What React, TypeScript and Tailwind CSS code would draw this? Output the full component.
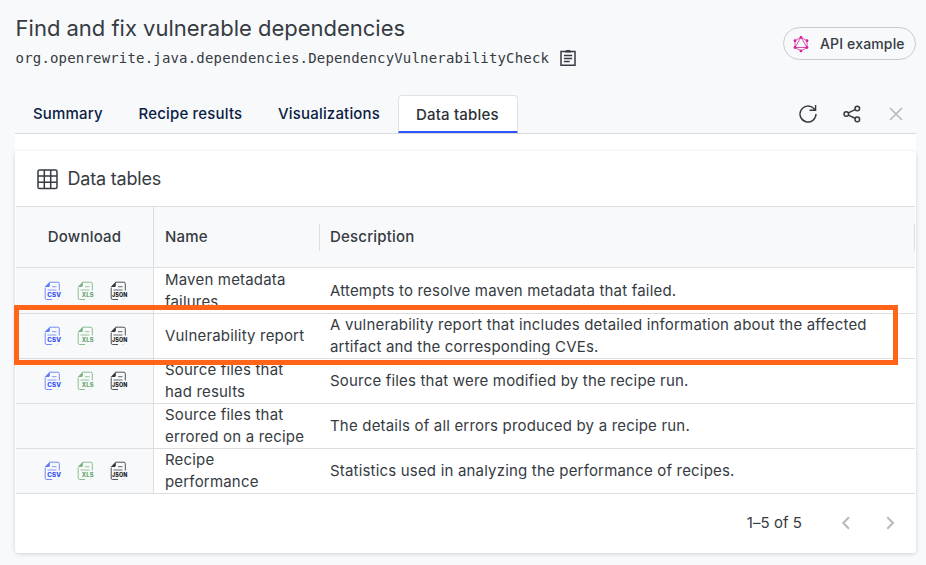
import React from "react";

const FileIcon = ({ label, color, ink }: { label: string; color: string; ink: string }) => (
  <svg width="20" height="20" viewBox="0 0 20 20" fill="none" className="overflow-visible">
    <path d="M2.2 6.5V17q0 1.5 1.5 1.5H9" stroke={color} strokeWidth="1" opacity=".85" />
    <path d="M6.5 1.2H14.8q1.5 0 1.5 1.5V9.5" stroke={color} strokeWidth="1" opacity=".85" />
    <path d="M1.7 6 6.8.8V4.5Q6.8 6 5.3 6Z" fill={color} />
    <path d="M9 5.7H13.5M4.5 9H13.5" stroke={color} strokeWidth="1" opacity=".75" />
    <path d="M13 18.5H14.5L16 17" stroke={color} strokeWidth=".8" opacity=".15" />
    <text
      x={label === "JSON" ? 3 : label === "XLS" ? 5.7 : 4.2}
      y="15.8"
      fontFamily="Inter, sans-serif"
      fontWeight="800"
      fontSize="5.6"
      textLength={label === "JSON" ? 15.6 : label === "XLS" ? 12 : 14}
      lengthAdjust="spacingAndGlyphs"
      fill={ink}
    >
      {label}
    </text>
  </svg>
);

const Downloads = () => (
  <div className="flex gap-[13px] pl-[27px]">
    <FileIcon label="CSV" color="#5b78fa" ink="#2c4bf5" />
    <FileIcon label="XLS" color="#78b37e" ink="#65a66c" />
    <FileIcon label="JSON" color="#333538" ink="#17191c" />
  </div>
);

const rows = [
  { name: "Maven metadata failures", text: "Attempts to resolve maven metadata that failed.", files: true },
  {
    name: "Vulnerability report",
    text: "A vulnerability report that includes detailed information about the affected artifact and the corresponding CVEs.",
    files: true,
  },
  { name: "Source files that had results", text: "Source files that were modified by the recipe run.", files: true },
  { name: "Source files that errored on a recipe", text: "The details of all errors produced by a recipe run.", files: false },
  { name: "Recipe performance", text: "Statistics used in analyzing the performance of recipes.", files: true },
];

const GraphqlIcon = () => (
  <svg width="16" height="18" viewBox="0 0 16 18" fill="none" stroke="#d61f9c" strokeWidth=".8">
    <path d="M8 2.3 14 5.7V12.5L8 15.9 2 12.5V5.7ZM8 2.3 14 12.5H2Z" />
    <g fill="#d61f9c" stroke="none">
      <circle cx="8" cy="2.3" r="1.4" />
      <circle cx="14" cy="5.7" r="1.4" />
      <circle cx="14" cy="12.5" r="1.4" />
      <circle cx="8" cy="15.9" r="1.4" />
      <circle cx="2" cy="12.5" r="1.4" />
      <circle cx="2" cy="5.7" r="1.4" />
    </g>
  </svg>
);

export default function App() {
  return (
    <div className="relative h-[565px] w-[926px] overflow-hidden bg-[#f8f9fb] pl-[15px] pr-[10px] font-['Inter',sans-serif] text-[#363b42]">
      <header className="flex h-[95px] items-start justify-between">
        <div className="pt-[13px]">
          <h1 className="pl-[0.6px] text-[22px] leading-[30px] tracking-[-0.01px]">Find and fix vulnerable dependencies</h1>
          <div className="flex items-center gap-[9px] pl-[0.6px] pt-[5px]">
            <span className="font-['DejaVu_Sans_Mono',monospace] text-[14px] leading-5 tracking-[0.177px]">
              org.openrewrite.java.dependencies.DependencyVulnerabilityCheck
            </span>
            <svg width="20" height="20" viewBox="0 0 20 20" fill="none" stroke="#363b42" strokeWidth="1.5">
              <path d="M3 3.5H17V17.2H3Z" />
              <path d="M7.2 3Q7.2 2.3 8.7 2.3 10 1 11.4 2.3 13 2.3 13 3V4.5H7.2Z" fill="#363b42" stroke="none" />
              <path d="M5.9 7.5H14.2M5.9 10.5H14.2M5.9 13.5H11.7" />
            </svg>
          </div>
        </div>
        <button className="mt-[27px] flex h-[33px] w-[133px] items-center gap-[11px] rounded-full border border-[#c9cbcf] pl-[9px] text-[14px] font-medium tracking-[0.16px]">
          <GraphqlIcon />
          API example
        </button>
      </header>

      <nav className="flex h-[39px] border-b border-[#d9dbde] text-[15px] font-medium tracking-[0.18px] text-[#0b2143]">
        <span className="w-[105px] pl-[18px] pt-[7px] leading-6">Summary</span>
        <span className="w-[140px] pl-[18.5px] pt-[7px] leading-6">Recipe results</span>
        <span className="w-[138px] pl-[18px] pt-[7px] leading-6">Visualizations</span>
        <span className="h-[38px] w-[120px] rounded-t-[4px] border border-b-2 border-[#dfe1e4] border-b-[#2f54ff] bg-white pl-[17px] pt-[7px] leading-6 text-[#2b3037]">
          Data tables
        </span>
        <div className="ml-auto flex items-center gap-6 pr-[10px]">
          <svg width="20" height="20" viewBox="0 0 20 20" fill="none" stroke="#363b42" strokeWidth="1.4">
            <path d="M18 10A8 8 0 1 1 15.6 4.3L17.5 6.2M17.6 1V6.2H11.5" />
          </svg>
          <svg width="20" height="20" viewBox="0 0 20 20" fill="none" stroke="#363b42" strokeWidth="1.5">
            <circle cx="4.3" cy="10" r="2.3" />
            <circle cx="15.3" cy="4.5" r="2.3" />
            <circle cx="15.3" cy="15.4" r="2.3" />
            <path d="M6.4 8.9 13.1 5.6M6.4 11.1 13.1 14.3" />
          </svg>
          <svg width="20" height="20" viewBox="0 0 20 20" fill="none" stroke="#b7b9bc" strokeWidth="1.6">
            <path d="M4 4 16 16M16 4 4 16" />
          </svg>
        </div>
      </nav>

      <div className="bg-white pt-[17px]">
        <section className="h-[402px] rounded-[4px] bg-white px-px shadow-[0_1px_4px_rgba(0,0,0,0.16)]">
          <div className="flex h-[56px] items-center gap-[8.4px] border-b border-[#dcdee0] pl-[20px] text-[18px] tracking-[-0.18px]">
            <svg width="23" height="22" viewBox="0 0 23 22" fill="none" stroke="#363b42" strokeWidth="1.5">
              <rect x="2" y="1.9" width="19" height="18.6" rx="1.6" />
              <path d="M8.3 1.9V20.5M14.7 1.9V20.5M2 8H21M2 14.3H21" />
            </svg>
            Data tables
          </div>
          <div className="flex h-[61px] items-center border-b border-[#dcdee0] bg-[#f8f9fb] text-[15px] font-medium tracking-[0.2px]">
            <div className="flex h-full w-[138px] items-center justify-center border-r border-[#dcdee0]">Download</div>
            <div className="w-[165px] pl-[11px]">Name</div>
            <div className="flex h-[27px] flex-1 items-center border-x border-[#dcdee0] pl-[10px]">Description</div>
          </div>
          {rows.map((row) => (
            <div key={row.name} className="flex h-[45px] border-b border-[#dcdee0] text-[15px] leading-[22px] tracking-[0.185px] nth-[3]:h-[46px]">
              <div className="flex w-[138px] items-center border-r border-[#dcdee0] bg-[#f8f9fb]">{row.files && <Downloads />}</div>
              <div className="flex w-[165px] items-center pl-[11px] pr-[10px]">{row.name}</div>
              <div className="flex flex-1 items-center pl-[11px] pr-[30px]">{row.text}</div>
            </div>
          ))}
          <div className="flex h-[58px] items-center justify-end pr-[15px] text-[15px] tracking-[0.05px]">
            <span>1–5 of 5</span>
            <svg className="ml-[34px]" width="20" height="20" viewBox="0 0 20 20" fill="none" stroke="#b7b9bc" strokeWidth="2">
              <path d="M13 4.3 7.3 10 13 15.7" />
            </svg>
            <svg className="ml-6" width="20" height="20" viewBox="0 0 20 20" fill="none" stroke="#b7b9bc" strokeWidth="2">
              <path d="M7.3 4.3 13 10 7.3 15.7" />
            </svg>
          </div>
        </section>
      </div>

      <div className="absolute left-[14px] top-[305px] h-[60px] w-[884px] border-[5px] border-[#ff6418]" />
    </div>
  );
}
